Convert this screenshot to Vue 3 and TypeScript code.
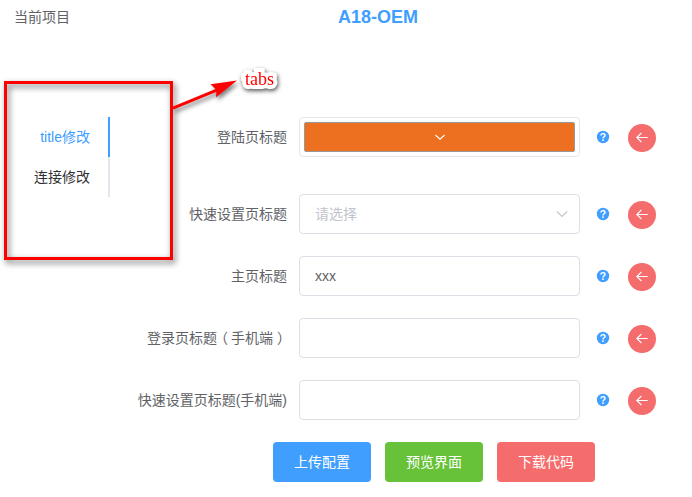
<script setup lang="ts">
import { ref } from 'vue'

interface Field {
  label: string
  kind: 'color' | 'select' | 'input'
  value: string
}

const project = 'A18-OEM'
const tabs: string[] = ['title修改', '连接修改']
const activeTab = ref(0)

const fields = ref<Field[]>([
  { label: '登陆页标题', kind: 'color', value: '#ed7020' },
  { label: '快速设置页标题', kind: 'select', value: '' },
  { label: '主页标题', kind: 'input', value: 'xxx' },
  { label: '登录页标题（手机端）', kind: 'input', value: '' },
  { label: '快速设置页标题(手机端)', kind: 'input', value: '' },
])

const actions = [
  { text: '上传配置', type: 'primary' },
  { text: '预览界面', type: 'success' },
  { text: '下载代码', type: 'danger' },
]

// Full-width brackets are set apart so that they can sit centred in their cell.
function labelParts(label: string): string[] {
  return label.split(/([（）])/).filter((part) => part !== '')
}
</script>

<template>
  <div class="page">
    <header class="header">
      <span class="header-label">当前项目</span>
      <strong class="project">{{ project }}</strong>
    </header>

    <main class="body">
      <nav class="tabs">
        <div
          v-for="(tab, i) in tabs"
          :key="tab"
          class="tab"
          :class="{ active: i === activeTab }"
          @click="activeTab = i"
        >{{ tab }}</div>
      </nav>

      <form class="form" @submit.prevent>
        <div v-for="field in fields" :key="field.label" class="row" :class="field.kind">
          <label class="label"><span v-for="(part, i) in labelParts(field.label)" :key="i" :class="{ bracket: part === '（' || part === '）' }">{{ part }}</span></label>
          <div v-if="field.kind === 'color'" class="control color-box">
            <div class="swatch" :style="{ backgroundColor: field.value }">
              <svg width="12" height="12" viewBox="0 0 12 12"><path d="M1.5 4 L6 8.2 L10.5 4" /></svg>
            </div>
          </div>
          <div v-else-if="field.kind === 'select'" class="control select-box">
            <span class="placeholder">请选择</span>
            <svg width="14" height="14" viewBox="0 0 14 14"><path d="M1.8 4.5 L7 9.5 L12.2 4.5" /></svg>
          </div>
          <input v-else v-model="field.value" class="control" type="text" />
          <svg class="help" width="14" height="14" viewBox="0 0 14 14">
            <circle cx="7" cy="7" r="6.2" />
            <path d="M5 5.6 C5 3 9 3 9 5.4 C9 6.8 7 6.7 7 8.4" />
            <rect x="6.2" y="9.3" width="1.6" height="1.6" rx=".5" />
          </svg>
          <button class="back" type="button">
            <svg width="14" height="14" viewBox="0 0 14 14"><path d="M12.7 6.5 H1.8 M6.4 2 L1.8 6.5 L6.4 11" /></svg>
          </button>
        </div>
      </form>
    </main>

    <footer class="actions">
      <button v-for="a in actions" :key="a.text" class="btn" :class="a.type" type="button">{{ a.text }}</button>
    </footer>

    <div class="mark-box"></div>
    <svg class="mark-arrow" width="90" height="50" viewBox="0 0 90 50">
      <path d="M8 38.2 L56 18.3" stroke="#f00" stroke-width="3" />
      <path d="M72 10.5 L45.5 14.2 L51.5 20 L51 27.2 Z" fill="#f00" />
    </svg>
    <span class="mark-text">tabs</span>
  </div>
</template>

<style>
body {
  margin: 0;
  background: #fff;
}
</style>

<style scoped>
.page {
  position: relative;
  box-sizing: border-box;
  width: 692px;
  height: 497px;
  overflow: hidden;
  font-family: 'Liberation Sans', 'Noto Sans CJK SC', sans-serif;
  font-size: 14px;
  color: #606266;
}
.header {
  display: flex;
  height: 117px;
  padding-left: 14px;
  line-height: 34px;
}
.header-label {
  width: 324px;
}
.project {
  font-size: 18px;
  color: #409eff;
}
.body {
  display: flex;
}
.tabs {
  width: 110px;
  height: 80px;
}
.tab {
  box-sizing: border-box;
  height: 40px;
  padding-right: 18px;
  border-right: 2px solid #e4e7ed;
  color: #303133;
  line-height: 40px;
  text-align: right;
}
.tab.active {
  border-right-color: #409eff;
  color: #409eff;
}
.form {
  display: flex;
  flex: 1;
  flex-direction: column;
  gap: 22px;
}
.row {
  display: flex;
  height: 40px;
  align-items: center;
}
.row.color {
  margin-bottom: 15px;
}
.label {
  width: 177px;
  margin-right: 12px;
  line-height: 40px;
  text-align: right;
  white-space: nowrap;
}
.bracket {
  padding: 0 3px 0 4px;
  font-feature-settings: 'halt' 1;
}
.control {
  box-sizing: border-box;
  width: 281px;
  height: 40px;
  padding: 0 15px;
  border: 1px solid #dcdfe6;
  border-radius: 4px;
  outline: none;
  background: #fff;
  color: #606266;
  font: inherit;
}
.control.color-box {
  padding: 4px;
  border-color: #e6e6e6;
}
.swatch {
  display: flex;
  box-sizing: border-box;
  height: 30px;
  align-items: center;
  justify-content: center;
  border: 1px solid #999;
  border-radius: 2px;
}
.swatch svg {
  fill: none;
  stroke: #fff;
  stroke-width: 1.1;
}
.select-box {
  display: flex;
  align-items: center;
  justify-content: space-between;
  padding-right: 10px;
}
.select-box svg {
  fill: none;
  stroke: #c0c4cc;
  stroke-width: 1.1;
}
.placeholder {
  color: #c0c4cc;
  line-height: 38px;
}
.help {
  margin-left: 16px;
}
.help circle {
  fill: #409eff;
}
.help path {
  fill: none;
  stroke: #fff;
  stroke-width: 1.5;
}
.help rect {
  fill: #fff;
}
.back {
  display: flex;
  width: 28px;
  height: 28px;
  align-items: center;
  justify-content: center;
  margin: 2px 0 0 18px;
  padding: 0;
  border: 0;
  border-radius: 50%;
  background: #f56c6c;
}
.back svg {
  fill: none;
  stroke: #fff;
  stroke-width: 1.1;
}
.actions {
  display: flex;
  gap: 14px;
  padding: 22px 0 0 273px;
}
.btn {
  width: 98px;
  height: 40px;
  padding: 0 0 2px;
  border: 0;
  border-radius: 4px;
  color: #fff;
  font: inherit;
}
.primary {
  background: #409eff;
}
.success {
  background: #67c23a;
}
.danger {
  background: #f56c6c;
}
.mark-box {
  position: absolute;
  top: 81px;
  left: 4px;
  box-sizing: border-box;
  width: 169px;
  height: 179px;
  border: 3px solid #f00;
  filter: drop-shadow(2px 3px 3px rgba(0, 0, 0, 0.6));
  pointer-events: none;
}
.mark-arrow {
  position: absolute;
  top: 70px;
  left: 165px;
  filter: drop-shadow(2px 3px 2px rgba(0, 0, 0, 0.5));
  pointer-events: none;
}
.mark-text {
  position: absolute;
  top: 69px;
  left: 245px;
  color: #f00;
  font: 18px/21px 'Liberation Serif', serif;
  -webkit-text-stroke: 8px #fff;
  stroke-linejoin: round;
  paint-order: stroke fill;
  filter: drop-shadow(1px 2px 2px rgba(0, 0, 0, 0.65));
}
</style>
